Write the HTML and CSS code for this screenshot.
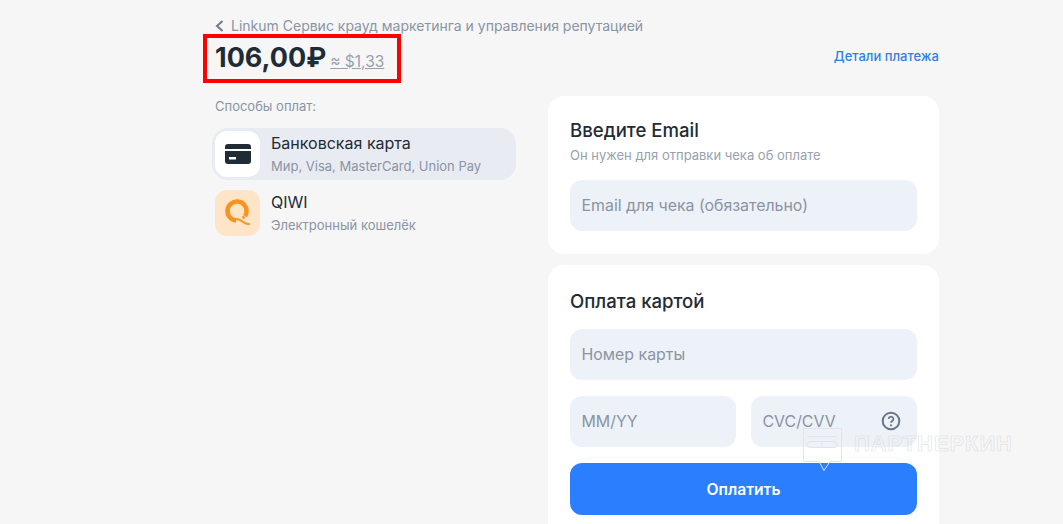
FILE: index.html
```html
<!DOCTYPE html>
<html lang="ru">
<head>
  <meta charset="UTF-8" />
  <meta name="viewport" content="width=device-width, initial-scale=1.0" />
  <title>Оплата</title>
  <link rel="stylesheet" href="styles.css">
</head>
<body>
  <div class="page">
    <header class="top">
      <a class="back">
        <svg class="back-icon" width="9" height="12" viewBox="0 0 9 12"><path d="M7.500 1 2 6l5.500 5" fill="none" stroke="#6f7a88" stroke-width="2"/></svg>
        Linkum Сервис крауд маркетинга и управления репутацией
      </a>
      <div class="price-row">
        <div class="price-box">
          <span class="price">106,00₽</span>
          <span class="price-usd">≈ $1,33</span>
        </div>
        <a class="details">Детали платежа</a>
      </div>
    </header>

    <div class="columns">
      <aside class="methods">
        <div class="methods-title">Способы оплат:</div>
        <div class="method method-active">
          <div class="method-icon">
            <svg width="26" height="20" viewBox="0 0 26 20">
              <path d="M3 0h20a3 3 0 0 1 3 3v2H0V3a3 3 0 0 1 3-3zM0 7h26v10a3 3 0 0 1-3 3H3a3 3 0 0 1-3-3zm4 6v2.500h7V13z" fill="#1f2b36" fill-rule="evenodd"/>
            </svg>
          </div>
          <div class="method-text">
            <div class="method-name">Банковская карта</div>
            <div class="method-desc">Мир, Visa, MasterCard, Union Pay</div>
          </div>
        </div>
        <div class="method">
          <div class="method-icon method-icon-qiwi">
            <svg width="28" height="30" viewBox="0 0 28 30">
              <circle cx="13" cy="13" r="9.500" fill="none" stroke="#f7931e" stroke-width="4.500" stroke-dasharray="49 10.700" transform="rotate(95 13 13)"/>
              <path d="M13 21c3 .5 5 2 7 3.500 1.500 1.200 3 1.700 5 1.500" fill="none" stroke="#f7931e" stroke-width="2" stroke-linecap="round"/>
              <circle cx="19.500" cy="19.500" r="1.400" fill="#f7931e"/>
            </svg>
          </div>
          <div class="method-text">
            <div class="method-name">QIWI</div>
            <div class="method-desc">Электронный кошелёк</div>
          </div>
        </div>
      </aside>

      <main class="forms">
        <section class="card">
          <h2 class="card-title">Введите Email</h2>
          <p class="card-sub">Он нужен для отправки чека об оплате</p>
          <div class="field">Email для чека (обязательно)</div>
        </section>

        <section class="card">
          <h2 class="card-title card-title-pay">Оплата картой</h2>
          <div class="field">Номер карты</div>
          <div class="field-row">
            <div class="field">MM/YY</div>
            <div class="field field-cvc">
              CVC/CVV
              <svg width="20" height="20" viewBox="0 0 20 20">
                <circle cx="10" cy="10" r="8.300" fill="none" stroke="#69778a" stroke-width="2"/>
                <path d="M7.600 8a2.400 2.400 0 1 1 3.600 2.100c-.8.5-1.200.9-1.200 1.700" fill="none" stroke="#69778a" stroke-width="1.800"/>
                <circle cx="10" cy="14.300" r="1.100" fill="#69778a"/>
              </svg>
            </div>
          </div>
          <button class="pay-btn">Оплатить</button>
        </section>
      </main>
    </div>
  </div>

  <div class="watermark">
    <svg width="42" height="46" viewBox="0 0 42 46">
      <path d="M1.500 1.500h38v33H28l-6 9-5-9H1.500z" fill="none" stroke="#e2e4e7"/>
      <rect x="5" y="14.500" width="30" height="6" rx="3" fill="none" stroke="#e2e4e7"/>
      <path d="M5 9.500h30M20 14.500v6" stroke="#e2e4e7"/>
    </svg>
    <span class="watermark-text">ПАРТНЕРКИН</span>
  </div>
</body>
</html>
```

FILE: styles.css
```css
* {
  box-sizing: border-box;
}
html, body {
  height: 524px;
  overflow: hidden;
}
body {
  margin: 0;
  background: #f6f6f7;
  font-family: 'Inter', sans-serif;
  color: #1f2b36;
  position: relative;
}
.page {
  width: 724px;
  margin-left: 215px;
  padding-top: 16px;
}
.back {
  display: flex;
  align-items: center;
  gap: 7px;
  font-size: 14px;
  line-height: 20px;
  color: #8a94a3;
}
.price-row {
  display: flex;
  justify-content: space-between;
  align-items: center;
  margin-top: -2px;
  height: 49px;
}
.price-box {
  display: flex;
  align-items: baseline;
  gap: 4px;
  border: 4px solid #f00;
  margin-left: -12px;
  padding-left: 8px;
  height: 49px;
  line-height: 39px;
  width: 198px;
  white-space: nowrap;
}
.price {
  font-size: 27px;
  font-weight: 700;
  color: #1f2b36;
}
.price-usd {
  font-size: 15.500px;
  color: #98a1ad;
  text-decoration: underline;
}
.details {
  font-size: 13px;
  font-weight: 500;
  color: #2f80e4;
  margin-bottom: 5px;
}
.columns {
  display: flex;
  justify-content: space-between;
  margin-top: 13px;
}
.methods {
  width: 301px;
  padding-top: 2px;
}
.methods-title {
  font-size: 13px;
  line-height: 16px;
  color: #8a94a3;
  margin-bottom: 14px;
}
.method {
  display: flex;
  align-items: center;
  gap: 11px;
  height: 52px;
  margin-left: -3px;
  padding: 0 3px;
  margin-bottom: 7px;
  border-radius: 16px;
}
.method-active {
  background: #e8ebf2;
}
.method-icon {
  width: 45px;
  height: 46px;
  border-radius: 12px;
  background: #fff;
  display: flex;
  align-items: center;
  justify-content: center;
  flex-shrink: 0;
}
.method-icon-qiwi {
  background: #ffe5c7;
}
.method-text {
  padding-bottom: 2px;
}
.method-name {
  font-size: 16px;
  line-height: 20px;
  color: #1f2b36;
}
.method-desc {
  font-size: 13px;
  line-height: 16px;
  margin-top: 5px;
  color: #8a94a3;
}
.forms {
  width: 391px;
  display: flex;
  flex-direction: column;
  gap: 11px;
}
.card {
  background: #fff;
  border-radius: 16px;
  padding: 22px 22px 23px;
}
.card-title {
  margin: 0;
  font-size: 18.600px;
  line-height: 24px;
  font-weight: 500;
  color: #1f2b36;
}
.card-title-pay {
  margin-top: 2px;
  margin-bottom: 16px;
}
.card-sub {
  margin: 5px 0 17px;
  font-size: 13px;
  line-height: 16px;
  color: #98a1ad;
}
.field {
  height: 51px;
  background: #edf1f8;
  border-radius: 12px;
  padding: 0 11.500px 1px;
  display: flex;
  align-items: center;
  font-size: 15.900px;
  color: #8a94a3;
}
.field-row {
  display: grid;
  grid-template-columns: 1fr 1fr;
  gap: 15px;
  margin-top: 16px;
}
.field-cvc {
  justify-content: space-between;
  padding-right: 16px;
}
.pay-btn {
  display: block;
  width: 100%;
  height: 52px;
  margin-top: 16px;
  border: 0;
  border-radius: 12px;
  background: #2b7fff;
  color: #fff;
  font-family: inherit;
  font-size: 15.600px;
  font-weight: 600;
}
.watermark {
  position: absolute;
  left: 802px;
  top: 427px;
  display: flex;
  align-items: flex-start;
  gap: 10px;
  pointer-events: none;
}
.watermark-text {
  font-family: 'Liberation Sans', sans-serif;
  font-weight: 700;
  font-size: 22px;
  line-height: 34px;
  letter-spacing: 0.900px;
  color: transparent;
  -webkit-text-stroke: 0.600px #dcdfe2;
}
```
